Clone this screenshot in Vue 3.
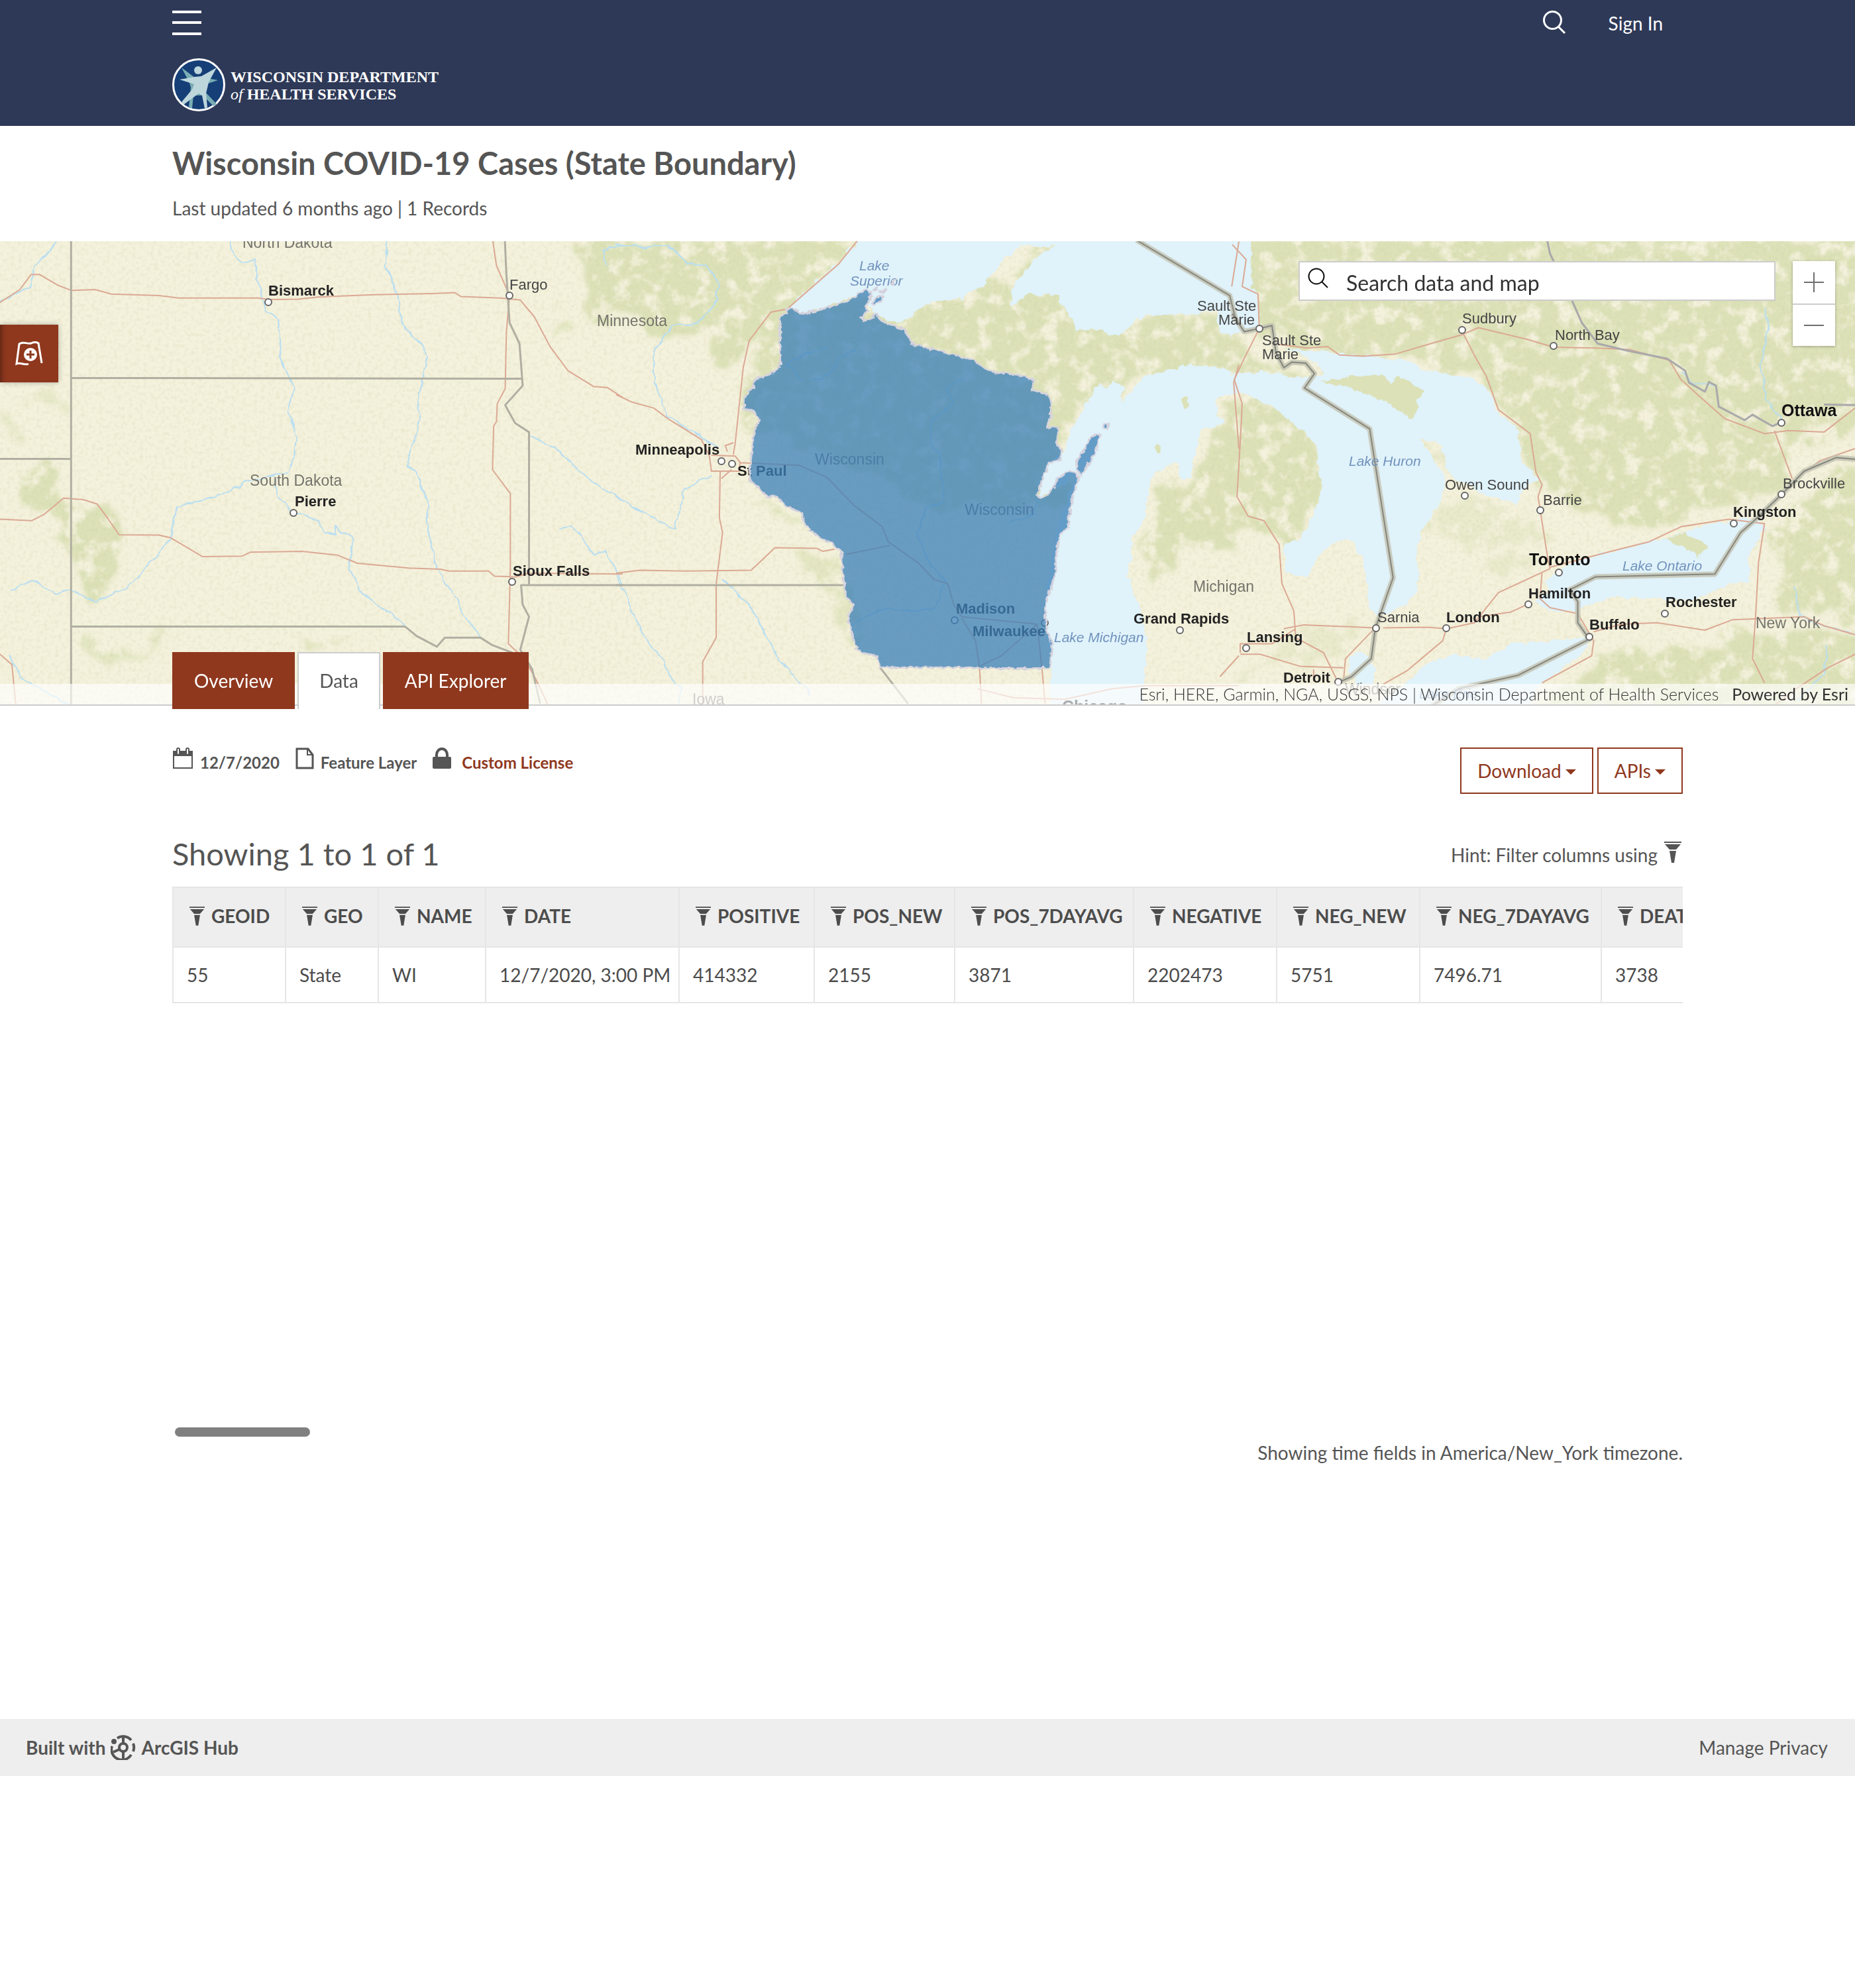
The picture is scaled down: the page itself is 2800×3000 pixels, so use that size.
<script setup>
const columns = [
  { name: 'GEOID', value: '55', width: 170 },
  { name: 'GEO', value: 'State', width: 140 },
  { name: 'NAME', value: 'WI', width: 162 },
  { name: 'DATE', value: '12/7/2020, 3:00 PM', width: 292 },
  { name: 'POSITIVE', value: '414332', width: 204 },
  { name: 'POS_NEW', value: '2155', width: 212 },
  { name: 'POS_7DAYAVG', value: '3871', width: 270 },
  { name: 'NEGATIVE', value: '2202473', width: 216 },
  { name: 'NEG_NEW', value: '5751', width: 216 },
  { name: 'NEG_7DAYAVG', value: '7496.71', width: 274 },
  { name: 'DEATHS', value: '3738', width: 190 }
]

// Map labels: [text, x, baseline, style]
const labels = [
  ['North Dakota', 366, 10, 'region'],
  ['Bismarck', 405, 82, 'city'],
  ['Fargo', 769, 73, 'town'],
  ['Minnesota', 901, 128, 'region'],
  ['South Dakota', 377, 369, 'region'],
  ['Pierre', 445, 400, 'city'],
  ['Sioux Falls', 774, 505, 'city'],
  ['Lake', 1297, 44, 'lake'],
  ['Superior', 1283, 67, 'lake'],
  ['Minneapolis', 959, 322, 'city'],
  ['St Paul', 1113, 354, 'city'],
  ['Wisconsin', 1230, 337, 'region'],
  ['Wisconsin', 1456, 413, 'region'],
  ['Madison', 1443, 562, 'city'],
  ['Milwaukee', 1468, 596, 'city'],
  ['Lake Michigan', 1591, 605, 'lake'],
  ['Grand Rapids', 1711, 577, 'city'],
  ['Iowa', 1045, 699, 'region'],
  ['Chicago', 1603, 711, 'metro'],
  ['Michigan', 1801, 529, 'region'],
  ['Sault Ste', 1807, 105, 'town'],
  ['Marie', 1839, 126, 'town'],
  ['Sault Ste', 1905, 157, 'town'],
  ['Marie', 1905, 178, 'town'],
  ['Sudbury', 2207, 124, 'town'],
  ['North Bay', 2347, 149, 'town'],
  ['Ottawa', 2689, 264, 'metro'],
  ['Lake Huron', 2036, 339, 'lake'],
  ['Owen Sound', 2181, 375, 'town'],
  ['Barrie', 2329, 398, 'town'],
  ['Brockville', 2691, 373, 'town'],
  ['Kingston', 2616, 416, 'city'],
  ['Toronto', 2308, 489, 'metro'],
  ['Lake Ontario', 2449, 497, 'lake'],
  ['Hamilton', 2307, 539, 'city'],
  ['Rochester', 2514, 552, 'city'],
  ['Buffalo', 2399, 586, 'city'],
  ['New York', 2650, 584, 'region'],
  ['Sarnia', 2079, 575, 'town'],
  ['London', 2183, 575, 'city'],
  ['Lansing', 1882, 605, 'city'],
  ['Detroit', 1937, 666, 'city'],
  ['Windsor', 2030, 684, 'region'],
  ['Lake Erie', 2142, 690, 'lake']
]

const dots = [
  [405, 92], [769, 82], [443, 410], [773, 514], [1089, 332], [1105, 336], [1441, 572], [1577, 576],
  [1781, 587], [1901, 132], [2207, 134], [2345, 158], [2689, 274], [2211, 384], [2325, 406],
  [2689, 382], [2617, 426], [2353, 500], [2307, 548], [2513, 562], [2399, 597], [2077, 584],
  [2183, 584], [1881, 614], [2020, 665]
]
</script>

<template>
  <div class="page">
    <header class="masthead">
      <div class="container">
        <div class="nav-row">
          <button class="icon-button" type="button" aria-label="Menu">
            <svg width="44" height="40" viewBox="0 0 44 40" stroke="#fff" stroke-width="4"><path d="M0 3h44M0 19h44M0 36h44" /></svg>
          </button>
          <div class="nav-actions">
            <button class="icon-button" type="button" aria-label="Search">
              <svg width="36" height="36" viewBox="0 0 36 36" fill="none" stroke="#fff" stroke-width="3"><circle cx="15.500" cy="15.500" r="13" /><path d="M24 25l10 10" /></svg>
            </button>
            <a href="#signin" class="signin">Sign In</a>
          </div>
        </div>
        <a href="#home" class="logo">
          <svg width="80" height="80" viewBox="0 0 80 80" aria-hidden="true">
            <circle cx="40" cy="40" r="38.500" fill="#163f77" stroke="#fff" stroke-width="3" />
            <path d="M14 14 34 29 47 29 69 33 54 38 50 51 67 69 62 72 46 56 32 56 30 75 25 75 28 44 26 37z" fill="#78adb3" />
            <path d="M67 14 55 36 51 53 53 74 49 76 45 56 40 53 17 70 14 66 30 47 33 39 11 32 34 28 44 27z" fill="#bcd6dc" />
            <circle cx="39" cy="18" r="6" fill="#bcd6dc" />
          </svg>
          <span class="logo-text">WISCONSIN DEPARTMENT<br /><i>of</i> HEALTH SERVICES</span>
        </a>
      </div>
    </header>

    <section class="heading container">
      <h1>Wisconsin COVID-19 Cases (State Boundary)</h1>
      <p>Last updated 6 months ago | 1 Records</p>
    </section>

    <section class="map">
      <svg class="map-canvas" viewBox="0 0 2800 699" preserveAspectRatio="xMidYMin slice" role="img" aria-label="Map of Wisconsin">
        <defs>
          <filter id="rough" x="-5%" y="-5%" width="110%" height="110%">
            <feTurbulence type="fractalNoise" baseFrequency="0.02" numOctaves="4" seed="4" result="n" />
            <feDisplacementMap in="SourceGraphic" in2="n" scale="60" xChannelSelector="R" yChannelSelector="G" result="d" />
            <feGaussianBlur in="d" stdDeviation="3" result="b" />
            <feTurbulence type="fractalNoise" baseFrequency="0.04" numOctaves="5" seed="9" />
            <feColorMatrix values="0 0 0 0 0  0 0 0 0 0  0 0 0 0 0  0 4 0 0 -1.05" result="m" />
            <feComposite in="b" in2="m" operator="in" />
          </filter>
          <filter id="coast" x="-5%" y="-5%" width="110%" height="110%">
            <feTurbulence type="fractalNoise" baseFrequency="0.08" numOctaves="3" seed="2" result="n" />
            <feDisplacementMap in="SourceGraphic" in2="n" scale="11" xChannelSelector="R" yChannelSelector="G" />
          </filter>
          <filter id="grain" x="0" y="0" width="100%" height="100%">
            <feTurbulence type="fractalNoise" baseFrequency="0.18" numOctaves="3" seed="7" />
            <feColorMatrix values="0 0 0 0 .58  0 0 0 0 .62  0 0 0 0 .36  0 2 0 0 -.95" />
          </filter>
          <filter id="wobble" x="-5%" y="-5%" width="110%" height="110%">
            <feTurbulence type="fractalNoise" baseFrequency="0.06" numOctaves="2" seed="5" result="n" />
            <feDisplacementMap in="SourceGraphic" in2="n" scale="9" xChannelSelector="R" yChannelSelector="G" />
          </filter>
          <filter id="jagged" x="-5%" y="-5%" width="110%" height="110%">
            <feTurbulence type="fractalNoise" baseFrequency="0.14" numOctaves="2" seed="3" result="n" />
            <feDisplacementMap in="SourceGraphic" in2="n" scale="7" xChannelSelector="R" yChannelSelector="G" />
          </filter>
        </defs>

        <rect width="2800" height="699" fill="#f4f1dc" />

        <!-- forest cover -->
        <g filter="url(#rough)" fill="#dce1b7">
          <g transform="translate(0 -4) scale(.5995 .4529)">
            <path d="M160 870 250 880 300 980 300 1120 260 1210 210 1190 170 1020 100 940 60 860 70 770 140 770z" />
            <path d="M1440 0h128v300l-90 -80z" />
            <path d="M190 1340 230 1410 330 1390 440 1300 330 1360zM740 1310 800 1360 900 1360zM1400 240 1460 250 1400 330z" opacity=".7" />
            <path d="M60 550 120 480 180 560 160 600 110 540zM0 560 60 660 20 700z" opacity=".5" />
          </g>
          <g transform="translate(930 -4) scale(.5995 .4529)">
            <path d="M0 0H620L440 240 400 260 330 400 270 440 200 300 120 330 0 240z" />
            <path d="M390 240 640 170 860 200 1110 20 1200 300 1400 230 1568 240V440L1300 460 1200 520 1120 700 1150 900 1080 880 800 900 660 800 500 700 330 620 330 500z" />
            <path d="M460 1040 570 1050 600 1300 650 1400 560 1260 460 1090zM350 860 430 900 480 980 400 920z" opacity=".7" />
            <path d="M1380 780 1440 840 1568 540V1050L1430 1030 1340 1160 1310 1040z" />
          </g>
          <g transform="translate(1860 -4) scale(.5995 .4529)">
            <path d="M-20 0H1600V620L1400 700 1390 800 1290 890 1180 900 1080 960 880 920 790 830 640 480 480 400 200 370 70 340 0 160z" />
            <path d="M-20 540 60 520 210 640 230 800 190 1000 130 1080 60 940 -20 1000zM20 330 90 420 240 450 170 480 0 430z" />
            <path d="M1600 740 1440 860 1360 1000 1380 1230 1600 1260zM960 1380 1600 1280V1600H720z" />
            <path d="M480 960 560 860 680 880 800 1000 640 1060zM180 1280 330 1290 260 1400 40 1420 0 1500zM620 1080 760 1060 700 1150zM460 660 540 690 560 800z" opacity=".45" />
          </g>
        </g>
        <rect width="2800" height="699" filter="url(#grain)" opacity=".3" />

        <!-- water -->
        <g filter="url(#coast)" fill="#e0f2fa">
          <g transform="translate(930 -4) scale(.5995 .4529)">
            <path d="M615 0 550 90 435 232 465 250 540 225 630 172 640 240 690 280 730 270 790 215 870 200 930 150 960 90 1020 25 1105 25 1070 45 1040 90 1000 150 990 225 1010 215 1030 185 1110 190 1160 305 1220 300 1240 325 1270 320 1310 270 1340 255 1470 250 1515 240 1515 310 1550 320 1600 300V0z" />
            <path d="M1435 420 1530 430 1590 500 1515 525 1510 590 1535 610 1470 640 1445 800 1425 800 1410 745 1360 775 1340 820 1330 930 1300 1000 1290 1130 1320 1240 1338 1330 1320 1600H1092L1095 1440 1080 1200 1110 960 1160 790 1060 870 1080 760 1120 720 1160 600 1215 480 1230 500 1245 480 1285 490 1270 545 1330 460z" />
          </g>
          <g transform="translate(1860 -4) scale(.5995 .4529)">
            <path d="M0 0 35 70 28 160 62 180 68 290 40 315 0 310z" />
            <path d="M130 368 230 375 370 395 450 410 490 440 600 465 640 500 670 580 720 640 730 740 770 800 735 830 720 885 650 860 610 830 560 805 540 760 525 690 500 672 470 668 490 700 530 780 540 830 515 900 480 960 465 1040 468 1160 440 1220 370 1260 345 1230 330 1080 310 1020 290 1000 240 1025 215 1060 190 1125 170 1130 135 1110 130 1020 175 1000 200 930 225 850 215 700 190 650 120 580 60 530 0 510V450L90 445 180 465 230 450 200 400z" />
            <path d="M785 1140 860 1075 1060 1010 1180 960 1260 940 1310 930 1345 960 1320 1010 1300 1060 1305 1140 1240 1160 1190 1190 1150 1210 1080 1200 960 1195 900 1220 860 1245 800 1240 762 1210 800 1175z" />
            <path d="M430 1490 500 1410 560 1385 640 1405 700 1350 890 1330 905 1340 870 1395 780 1480 720 1600H310zM300 1385 330 1378 362 1430 355 1480 320 1490 290 1440z" />
            <g fill="#dce1b7">
              <path d="M225 475 300 460 380 455 400 490 420 460 440 470 485 510 460 540 470 560 455 600 430 580 380 540 300 500z" />
              <path d="M1090 1000 1140 980 1180 1010 1200 1030 1170 1060 1140 1030z" />
            </g>
          </g>
          <g fill="#dce1b7"><ellipse cx="1790" cy="242" rx="5" ry="11" /><ellipse cx="1748" cy="312" rx="3" ry="6" /></g>
        </g>

        <!-- rivers -->
        <g class="lines" filter="url(#wobble)" stroke="#b8def2" stroke-width="2">
          <g transform="translate(0 -4) scale(.5995 .4529)">
            <path d="M150 0 90 90 75 160 0 212M578 0 590 60 610 80 640 68 655 180 670 240 703 270 708 400 740 500 725 580 748 660 730 780 690 785 620 810 560 850 480 880 445 895 430 1000 360 1105 320 1160 240 1215 180 1170 140 1185 80 1140 25 1170M690 800 700 860 740 910 800 940 820 980 850 985 840 955 890 1000 880 1100 910 1180 1020 1285M975 0 970 90 1000 180 1015 290 1060 350 1078 395 1050 540 1058 600 1025 755 1045 770 1078 890 1075 950 1100 1100 1150 1200 1165 1250 1210 1325M1335 655 1400 700 1480 800 1568 870M1410 965 1440 960 1500 1055 1525 1040 1568 1150M1568 20 1520 40 1525 90M20 1385 60 1470 170 1550" />
          </g>
          <g transform="translate(930 -4) scale(.5995 .4529)">
            <path d="M0 20 80 30 130 20 180 85 230 90 260 155 245 230 200 285 140 290 95 380 95 480 130 590 200 650 260 700M0 860 80 920 148 970 170 840 240 785M0 1120 50 1270 90 1360 120 1400 130 1450 160 1500 155 1568M270 1135 340 1230 410 1400 490 1520M470 470 430 420 480 380 530 365M490 470 540 450 560 400 600 370M870 470 830 500 850 550 800 600 790 680 815 720 825 880 780 900 760 980 780 1060 830 1150 800 1230 740 1245 660 1235 590 1290M990 950 1050 920 1060 870" />
          </g>
          <g transform="translate(1860 -4) scale(.5995 .4529)">
            <path d="M1340 230 1350 300 1330 420 1345 540 1385 605M1415 1160 1430 1260 1560 1320M1500 1350 1490 1450 1420 1540M1130 440 1160 480 1210 490" />
          </g>
        </g>

        <!-- roads -->
        <g class="lines" stroke="#dba994" stroke-width="2">
          <g transform="translate(0 -4) scale(.5995 .4529)">
            <path d="M0 213 50 170 78 120 100 120 145 155 180 173 240 170 280 185 400 190 450 198 650 198 680 203 750 202 800 195 940 187 1090 183 1145 180 1160 193 1260 198 1310 205 1345 260 1385 360 1430 440 1495 493 1530 497 1568 530M1240 0 1250 90 1283 190 1275 310 1272 500 1252 550 1250 610 1243 625 1240 770 1285 850 1285 1100 1280 1350 1320 1400 1350 1470 1380 1555M0 935 80 940 110 920 160 865 210 870 245 885 270 930 300 987 400 988 430 997 510 1060 610 1058 630 1045 760 1042 850 1055 900 1082 1030 1098 1110 1102 1130 1108 1230 1108 1245 1125 1300 1127 1330 1115 1568 1118M0 1385 30 1420 40 1555" />
          </g>
          <g transform="translate(930 -4) scale(.5995 .4529)">
            <path d="M612 0 560 85 430 235 390 245 335 340 320 430 300 680 295 720M0 520 40 545 95 565 130 600 215 670 235 725 240 775H310L312 745 300 725 240 722M295 680 275 690 280 710M262 775 260 930 268 980 252 1150V1330L218 1410V1550M265 800 290 770M312 747 460 755 530 795 600 890 670 960 685 1010 760 1080 800 1135 835 1150 850 1220 870 1260 1060 1285M0 1115 60 1105 180 1108 340 1105 400 1030 505 1032 520 1042 550 1035M580 1052 690 1022M870 1265 905 1340 915 1430 920 1550M915 1425 970 1390 1060 1285 1072 1430 1080 1550M910 1500 1000 1530 1130 1535 1250 1500 1330 1490 1568 1490M1568 10 1550 160M1568 420 1555 480 1568 700M1568 1390 1520 1460" />
          </g>
          <g transform="translate(1860 -4) scale(.5995 .4529)">
            <path d="M0 20 35 70 25 160 65 185 68 300 30 400 5 470 25 550 20 680 12 860 40 925 80 940 118 1020 125 1150 155 1240 160 1330 230 1380 265 1475M100 350 190 365 240 360 270 388 330 392 410 385 500 350 579 320 620 297 740 335 810 362 920 365 1000 370 1100 405 1130 470 1180 530 1240 600 1340 650 1400 640 1490 645 1568 565M579 310 610 390 640 460 670 570 750 650 765 780 780 820 770 860 795 1070 800 1100 670 1180 610 1280 540 1300 490 1295 380 1297M800 1095 960 1040 1050 1010 1130 960 1250 935 1340 950 1325 1080 1318 1250 1310 1400 1340 1480M1365 640 1410 800M1568 700 1480 740 1420 800M780 1110 775 1200 800 1230 870 1250 910 1340 905 1390 780 1480M750 1215 700 1245 620 1260M539 1300 530 1340 440 1440 380 1485M20 1385 70 1385 170 1425 280 1430M130 1300 180 1287 360 1297 285 1400 280 1475M20 1380V1350H100L160 1300M205 1475V1435M910 1310 980 1285 1070 1280 1190 1305 1260 1270 1440 1260 1490 1290 1568 1320M1568 1385 1500 1430 1420 1500 1360 1560" />
          </g>
        </g>

        <!-- state and national borders -->
        <g class="lines" stroke="#b0afa2" stroke-width="3">
          <g transform="translate(0 -4) scale(.5995 .4529)">
            <path d="M179 0V1568M0 734H179M179 464 1316 467M179 1293H1020L1050 1325 1100 1360 1120 1330 1210 1330 1240 1355 1290 1380M1271 0 1275 120 1283 280 1308 350 1316 490 1272 555 1297 615 1332 645V1155M1568 1155H1312L1316 1220 1332 1260 1310 1370 1340 1435 1360 1550" />
          </g>
          <g transform="translate(930 -4) scale(.5995 .4529)">
            <path d="M0 1155H580M665 1430 700 1490 735 1550" />
          </g>
          <g transform="translate(1860 -4) scale(.5995 .4529)" stroke="#a9a9ab">
            <path d="M792 0 800 50 850 190 880 280 920 350 990 372 1095 400 1140 440 1150 480 1190 510 1200 478 1218 490 1225 560 1290 605 1310 587 1360 625 1382 612M1490 553 1568 555" />
          </g>
        </g>
        <g class="lines border-national">
          <g v-for="tone in ['halo', 'core']" :key="tone" :class="tone">
            <path transform="translate(930 -4) scale(.5995 .4529)" d="M1310 5 1545 190 1560 270" />
            <path transform="translate(1860 -4) scale(.5995 .4529)" d="M0 250 30 310 68 300 100 290 110 380 130 430 150 412 185 415 207 450 182 498 346 634 405 1130 360 1300 350 1400 300 1460 269 1478M490 1568 570 1500 720 1455 899 1335 870 1280 870 1210 850 1170 915 1127 1215 1118 1280 980 1310 945 1383 853 1440 775 1520 730 1568 735" />
          </g>
        </g>

        <g class="dots"><circle v-for="d in dots" :key="d.join()" :cx="d[0]" :cy="d[1]" r="5" /></g>
        <text v-for="(l, i) in labels" :key="i" :x="l[1]" :y="l[2]" :class="l[3]">{{ l[0] }}</text>

        <!-- state boundary feature -->
        <g filter="url(#jagged)">
          <g transform="translate(930 -4) scale(.5995 .4529)" class="feature">
            <path d="M413 258 428 252 430 236 442 232 462 250 500 243 545 222 580 210 605 192 612 180 632 172 643 180 638 205 628 228 634 238 618 262 622 275 640 268 652 252 665 270 680 282 700 288 708 296 728 305 738 330 744 350 770 360 810 372 860 390 900 405 935 438 965 450 985 446 1005 455 1040 462 1052 475 1048 505 1080 515 1095 540 1095 590 1085 632 1113 628 1108 680 1122 708 1118 738 1092 745 1075 790 1062 855 1070 868 1100 835 1112 800 1140 772 1155 778 1165 795 1150 860 1140 920 1138 965 1118 985 1106 1070 1108 1110 1090 1180 1080 1230 1085 1310 1098 1350 1092 1432H902L898 1429H665L655 1392 620 1380 600 1355 590 1300 583 1255 600 1222 578 1195 570 1110 568 1050 545 1015 515 1000 475 955 468 915 425 890 405 860 380 858 335 803 342 700 348 640 360 605 345 575 323 570V530L345 495 350 470 385 450 405 438 413 425z" />
            <path d="M1160 770 1158 745 1175 710 1190 670 1208 650 1218 655 1208 710 1185 760 1170 790zM1228 618 1238 618 1236 634 1227 630zM690 148 702 138 698 152zM662 178 680 168 674 180zM644 218 655 196 672 190 668 206 650 224zM646 172 655 162 656 175z" />
          </g>
        </g>
      </svg>

      <button class="add-layer" type="button" aria-label="Add to map">
        <svg width="42" height="38" viewBox="0 0 42 38" fill="none" stroke="#fff" stroke-width="3">
          <path d="M20 34C14 37 8 31 2 34L6 4c7-5 11 1 18-1 4-2 8-2 11 0l5 30" />
          <circle cx="23" cy="20" r="10" fill="#fff" stroke="none" /><path d="M23 14v12M17 20h12" stroke="#8f381e" />
        </svg>
      </button>

      <label class="map-search">
        <svg width="32" height="32" viewBox="0 0 32 32" fill="none" stroke="#111" stroke-width="2"><circle cx="13" cy="13" r="11.500" /><path d="M21 21l9 9" /></svg>
        <input type="text" placeholder="Search data and map" aria-label="Search data and map" />
      </label>

      <div class="zoom">
        <button type="button" aria-label="Zoom in"><svg width="30" height="30" viewBox="0 0 30 30" stroke="#6e6e6e" stroke-width="2"><path d="M15 0v30M0 15h30" /></svg></button>
        <button type="button" aria-label="Zoom out"><svg width="30" height="30" viewBox="0 0 30 30" stroke="#6e6e6e" stroke-width="2"><path d="M0 15h30" /></svg></button>
      </div>

      <div class="attribution">
        <span>Esri, HERE, Garmin, NGA, USGS, NPS | Wisconsin Department of Health Services</span>
        <span>Powered by <a href="#esri">Esri</a></span>
      </div>
    </section>

    <main class="container">
      <nav class="tabs">
        <a href="#overview">Overview</a>
        <a href="#data" class="active">Data</a>
        <a href="#api">API Explorer</a>
      </nav>

      <div class="details">
        <ul class="meta">
          <li>
            <svg width="32" height="34" viewBox="0 0 32 34" fill="none" stroke="#555" stroke-width="2"><path d="M2 12V31h28V12" /><path d="M1 5h30v8H1z" fill="#555" stroke="none" /><rect x="7" y="1" width="4" height="10" rx="2" fill="#fff" /><rect x="21" y="1" width="4" height="10" rx="2" fill="#fff" /></svg>
            12/7/2020
          </li>
          <li>
            <svg width="28" height="34" viewBox="0 0 28 34" fill="none" stroke="#555" stroke-width="3"><path d="M2 2h17l7 9v20H2z" /><path d="M18 2v9h8" stroke-width="2" /></svg>
            Feature Layer
          </li>
          <li>
            <svg width="28" height="34" viewBox="0 0 28 34"><rect x="0" y="14" width="28" height="18" rx="2" fill="#555" /><path d="M6 16V11a8 9 0 0 1 16 0v5" fill="none" stroke="#555" stroke-width="4" /></svg>
            <a href="#license">Custom License</a>
          </li>
        </ul>
        <div class="actions">
          <button type="button">Download<i class="caret"></i></button>
          <button type="button">APIs<i class="caret"></i></button>
        </div>
      </div>

      <div class="table-head">
        <h2>Showing 1 to 1 of 1</h2>
        <p>Hint: Filter columns using
          <svg width="26" height="32" viewBox="0 0 26 32" fill="#555"><path d="M0 0h26v2H0zM1 4h24l-7 8H8zM8 14h10l-3 18h-4z" /></svg>
        </p>
      </div>

      <div class="table-scroll">
        <table>
          <colgroup><col v-for="c in columns" :key="c.name" :style="{ width: c.width + 'px' }" /></colgroup>
          <thead>
            <tr>
              <th v-for="c in columns" :key="c.name" scope="col">
                <button type="button">
                  <svg width="23" height="29" viewBox="0 0 26 32" fill="#4c4c4c"><path d="M0 0h26v2H0zM1 4h24l-7 8H8zM8 14h10l-3 18h-4z" /></svg>{{ c.name }}
                </button>
              </th>
            </tr>
          </thead>
          <tbody>
            <tr><td v-for="c in columns" :key="c.name">{{ c.value }}</td></tr>
          </tbody>
        </table>
        <div class="scroll-thumb"></div>
      </div>
      <p class="timezone">Showing time fields in America/New_York timezone.</p>
    </main>

    <footer>
      <a href="#hub" class="built">
        Built with
        <svg width="38" height="38" viewBox="0 0 38 38" fill="none" stroke="#555" stroke-width="4">
          <circle cx="19" cy="19" r="6" /><path d="M19 2v11M19 25v11M13 22l-9 4" />
          <path d="M10 5a16 16 0 0 1 21 3M34 13a16 16 0 0 1 0 12M31 30A16 16 0 0 1 2 17" /><circle cx="5" cy="10" r="4" fill="#555" stroke="none" />
        </svg>
        ArcGIS Hub
      </a>
      <a href="#privacy">Manage Privacy</a>
    </footer>
  </div>
</template>

<style>
body { margin: 0; background: #fff; }
</style>

<style scoped>
* { box-sizing: border-box; }
.page { font: 28px/40px Lato, "Open Sans", sans-serif; color: #555; overflow-x: hidden; }
a { color: inherit; text-decoration: none; }
button, input { font: inherit; color: inherit; padding: 0; margin: 0; border: 0; background: none; border-radius: 0; }
svg { display: block; flex: none; }
h1, h2, p, ul { margin: 0; padding: 0; font-weight: 400; }
.container { max-width: 2280px; margin: 0 auto; }

.masthead { background: #2e3957; color: #fff; height: 190px; }
.nav-row { display: flex; justify-content: space-between; height: 88px; padding-top: 15px; }
.icon-button { align-self: flex-start; }
.nav-actions { display: flex; gap: 64px; padding-right: 30px; }
.logo { display: inline-flex; align-items: center; gap: 8px; }
.logo-text { padding-top: 2px; font: bold 24px/26px "Liberation Serif", serif; white-space: nowrap; }
.logo-text i { font-weight: 400; }

.heading { height: 174px; padding-top: 26px; }
.heading h1 { font-size: 47px; line-height: 60px; font-weight: 700; }
.heading p { margin-top: 18px; }

.map { position: relative; height: 701px; border-bottom: 2px solid #ccc; overflow: hidden; }
.map-canvas { width: 100%; height: 699px; }
.lines { fill: none; stroke-linejoin: round; }
.lines path { vector-effect: non-scaling-stroke; }
.halo { stroke: #c3c3b2; stroke-width: 8px; opacity: .85; }
.core { stroke: #85877f; stroke-width: 2px; }
.dots circle { fill: #fff; stroke: #666; stroke-width: 2px; }
text { font-family: "Liberation Sans", Arial, sans-serif; font-size: 22px; }
.region { fill: #74746c; font-size: 23px; }
.town { fill: #444; }
.city { fill: #222; font-weight: 700; }
.metro { fill: #111; font-weight: 700; font-size: 25px; }
.lake { fill: #7193bd; font-style: italic; font-size: 21px; }
.feature { fill: #3d80b8; fill-opacity: .76; stroke: #d5d3dd; stroke-width: 3px; stroke-linejoin: round; }
.feature path { vector-effect: non-scaling-stroke; }

.add-layer { position: absolute; left: 0; top: 126px; width: 88px; height: 87px; padding-left: 23px; background: #8f381e; box-shadow: 0 0 8px rgba(0, 0, 0, .3), inset 8px 0 8px -6px rgba(0, 0, 0, .4); }
.map-search { position: absolute; right: 120px; top: 30px; width: 720px; height: 60px; display: flex; gap: 26px; padding: 8px 0 0 12px; background: #fff; border: 2px solid #ccc; }
.map-search input { flex: 1; height: 44px; font-size: 32px; outline: 0; }
.map-search input::placeholder { color: #323232; opacity: 1; }
.zoom { position: absolute; right: 30px; top: 30px; width: 64px; background: #fff; box-shadow: 0 1px 4px rgba(0, 0, 0, .3); }
.zoom button { display: flex; align-items: center; justify-content: center; width: 64px; height: 64px; }
.zoom button + button { border-top: 2px solid #ccc; }
.attribution { position: absolute; left: 0; right: 0; bottom: 0; height: 31px; display: flex; justify-content: flex-end; gap: 20px; padding-right: 10px; background: rgba(255, 255, 255, .66); color: #323232; font-size: 25px; line-height: 30px; white-space: nowrap; }
.attribution span:first-child { font-weight: 300; }

.tabs { position: relative; display: flex; gap: 4px; margin-top: -81px; }
.tabs a { height: 86px; padding: 0 33px; line-height: 86px; color: #fff; background: #8f381e; }
.tabs .active { padding: 0 31px; color: #555; background: #fff; border: 2px solid #ccc; border-bottom: 0; line-height: 82px; }

.details { display: flex; justify-content: space-between; margin-top: 58px; }
.meta { display: flex; gap: 24px; list-style: none; font-size: 24px; font-weight: 700; }
.meta li { display: flex; gap: 10px; line-height: 46px; height: 48px; }
.meta li:last-child { gap: 16px; }
.meta a { color: #8f381e; }
.actions { display: flex; gap: 6px; }
.actions button { display: flex; align-items: center; gap: 6px; height: 70px; padding: 0 24px; border: 2px solid #8f381e; color: #8f381e; }
.caret { margin-top: 3px; border: 8px solid transparent; border-top-color: #8f381e; border-bottom: 0; }

.table-head { display: flex; justify-content: space-between; align-items: flex-end; height: 140px; padding-bottom: 20px; }
.table-head h2 { font-size: 47px; line-height: 60px; }
.table-head p { display: flex; gap: 10px; padding: 0 2px 8px 0; }

.table-scroll { display: flex; flex-direction: column; justify-content: space-between; height: 834px; padding-bottom: 4px; overflow: hidden; }
table { width: 2346px; border-collapse: collapse; table-layout: fixed; color: #4c4c4c; }
th, td { border: 2px solid #e6e6e6; text-align: left; white-space: nowrap; }
th { height: 90px; padding: 0 0 4px 24px; background: #eee; font-weight: 700; }
th button { display: flex; align-items: center; gap: 10px; }
td { height: 84px; padding: 0 20px; }
.scroll-thumb { width: 204px; height: 14px; margin-left: 4px; border-radius: 7px; background: #808080; }
.timezone { text-align: right; }

footer { display: flex; justify-content: space-between; align-items: center; height: 86px; margin-top: 382px; padding: 0 41px 0 39px; background: #eee; }
.built { display: flex; align-items: center; gap: 8px; font-weight: 700; }
</style>
